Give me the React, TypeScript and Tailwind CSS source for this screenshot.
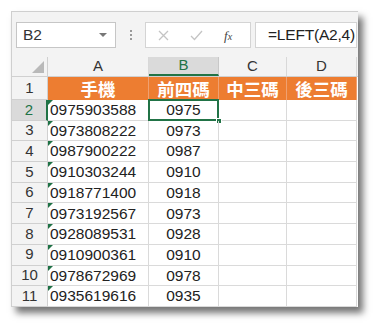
import React from "react";

const rows: [string, string][] = [
  ["0975903588", "0975"],
  ["0973808222", "0973"],
  ["0987900222", "0987"],
  ["0910303244", "0910"],
  ["0918771400", "0918"],
  ["0973192567", "0973"],
  ["0928089531", "0928"],
  ["0910900361", "0910"],
  ["0978672969", "0978"],
  ["0935619616", "0935"],
];

const font = { fontFamily: '"Liberation Sans", Arial, sans-serif' };
const cjk = { fontFamily: '"Noto Sans CJK TC", "Noto Sans CJK SC", sans-serif' };

export default function App() {
  return (
    <div className="w-[378px] h-[326px] bg-white relative overflow-hidden" style={font}>
      <div className="absolute left-[11px] top-[11px] w-[347px] h-[296px] bg-white border-l border-t border-[#cfcfcf] shadow-[5px_6px_7px_rgba(0,0,0,0.55)] flex flex-col">
        {/* toolbar */}
        <div className="h-[45px] bg-[#f3f3f3] flex items-start pt-[10px] pl-[4px]">
          <div className="w-[100px] h-[26px] bg-white border border-[#c6c6c6] flex items-center pl-[6px] pr-[8px] justify-between">
            <span className="text-[15.5px] text-[#333] leading-none">B2</span>
            <span className="w-0 h-0 border-l-[4px] border-r-[4px] border-t-[4px] border-l-transparent border-r-transparent border-t-[#777]" />
          </div>
          <div className="w-[29px] h-[26px] flex flex-col items-center justify-center gap-[2px]">
            <span className="w-[2px] h-[2px] bg-[#999]" />
            <span className="w-[2px] h-[2px] bg-[#999]" />
            <span className="w-[2px] h-[2px] bg-[#999]" />
          </div>
          <div className="w-[106px] h-[26px] bg-white border border-[#d4d4d4] flex items-center relative">
            <svg className="absolute left-[12px] top-[7px]" width="11" height="11" viewBox="0 0 11 11">
              <path d="M1 1 L10 10 M10 1 L1 10" stroke="#c4c4c4" strokeWidth="1.3" />
            </svg>
            <svg className="absolute left-[44px] top-[7px]" width="13" height="11" viewBox="0 0 13 11">
              <path d="M1 6 L4.5 9.5 L12 1" stroke="#c4c4c4" strokeWidth="1.3" fill="none" />
            </svg>
            <span className="absolute left-[78px] top-[3px] text-[13px] italic text-[#444]" style={{ fontFamily: '"Liberation Serif", serif' }}>
              f<span className="text-[10px]">x</span>
            </span>
          </div>
          <div className="ml-[4px] w-[102px] h-[26px] bg-white border border-[#d4d4d4] flex items-center pl-[12px]">
            <span className="text-[15.5px] text-[#222] leading-none tracking-[-0.2px]">=LEFT(A2,4)</span>
          </div>
        </div>
        {/* sheet */}
        <div className="flex flex-col">
          {/* column header */}
          <div className="flex h-[20px] bg-[#f3f3f3] border-b border-[#d0d0d0]">
            <div className="w-[36px] relative border-r border-[#d0d0d0]">
              <span className="absolute right-[3px] bottom-[3px] w-0 h-0 border-l-[12px] border-t-[12px] border-l-transparent border-t-transparent border-b-0 border-r-0" style={{ borderBottom: "12px solid #b9b9b9", borderLeft: "12px solid transparent", borderTop: 0 }} />
            </div>
            <div className="w-[101px] border-r border-[#d8d8d8] flex items-center justify-center text-[15px] text-[#333]">A</div>
            <div className="w-[70px] bg-[#dadada] border-r border-[#c8c8c8] border-b-2 border-b-[#217346] flex items-center justify-center text-[15px] text-[#217346]">B</div>
            <div className="w-[68px] border-r border-[#d8d8d8] flex items-center justify-center text-[15px] text-[#333]">C</div>
            <div className="w-[70px] border-r border-[#d8d8d8] flex items-center justify-center text-[15px] text-[#333]">D</div>
          </div>
          {/* row 1 */}
          <div className="flex h-[23px]">
            <div className="w-[36px] bg-[#f3f3f3] border-r border-b border-[#d0d0d0] flex items-center justify-center text-[15px] text-[#333]">1</div>
            {["手機", "前四碼", "中三碼", "後三碼"].map((t, i) => (
              <div
                key={t}
                className={`${i === 0 ? "w-[101px]" : i === 2 ? "w-[68px]" : "w-[70px]"} bg-[#ed7d31] border-r border-[#f0a070] flex items-center justify-center text-white font-bold text-[17.5px] leading-none`}
                style={cjk}
              >
                {t}
              </div>
            ))}
          </div>
          {rows.map(([a, b], idx) => {
            const sel = idx === 0;
            return (
              <div key={a} className="flex h-[20.7px]">
                <div
                  className={`w-[36px] border-b border-[#d0d0d0] flex items-center justify-center text-[15px] ${
                    sel ? "bg-[#dadada] text-[#217346] border-r-2 border-r-[#217346]" : "bg-[#f3f3f3] text-[#333] border-r border-r-[#d0d0d0]"
                  }`}
                >
                  {idx + 2}
                </div>
                <div className="w-[101px] border-r border-b border-[#dadada] relative flex items-center pl-[2px] text-[15.5px] text-[#222] leading-none">
                  <span className="absolute left-0 top-0 w-0 h-0" style={{ borderTop: "5px solid #1e7145", borderRight: "5px solid transparent" }} />
                  {a}
                </div>
                <div className="w-[70px] border-r border-b border-[#dadada] relative flex items-center justify-center text-[15.5px] text-[#222] leading-none">
                  {sel && (
                    <>
                      <span className="absolute left-[-1px] top-[-1px] right-[-1px] bottom-[-1px] border-2 border-[#217346]" />
                      <span className="absolute right-[-4px] bottom-[-4px] w-[6px] h-[6px] bg-[#217346] border border-white" />
                    </>
                  )}
                  {b}
                </div>
                <div className="w-[68px] border-r border-b border-[#dadada]" />
                <div className="w-[70px] border-r border-b border-[#dadada]" />
              </div>
            );
          })}
        </div>
      </div>
    </div>
  );
}
